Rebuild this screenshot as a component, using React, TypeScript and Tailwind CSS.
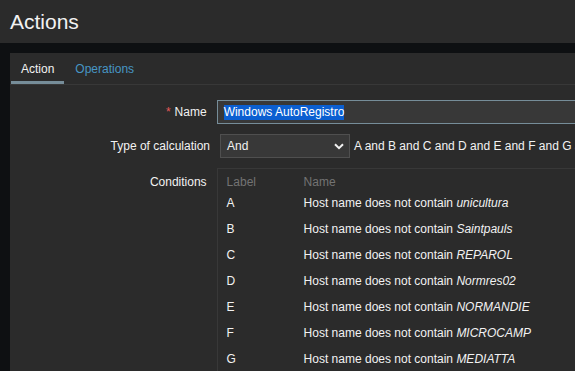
const conditions = [
  { label: "A", value: "unicultura" },
  { label: "B", value: "Saintpauls" },
  { label: "C", value: "REPAROL" },
  { label: "D", value: "Normres02" },
  { label: "E", value: "NORMANDIE" },
  { label: "F", value: "MICROCAMP" },
  { label: "G", value: "MEDIATTA" },
];

const Chevron = () => (
  <svg width="10" height="7" viewBox="0 0 10 7" className="shrink-0">
    <path d="M1 1.2 L5 5.2 L9 1.2" fill="none" stroke="#f2f2f2" strokeWidth="2" />
  </svg>
);

export default function App() {
  return (
    <div
      className="w-[575px] h-[371px] overflow-hidden bg-[#0e1012] text-[#f2f2f2] text-[12px]"
      style={{ fontFamily: '"Liberation Sans", Arial, sans-serif' }}
    >
      <header className="h-[43px] bg-[#2b2b2b] flex items-center pl-[10px]">
        <h1 className="text-[21px] leading-none text-[#f2f2f2]">Actions</h1>
      </header>

      <div className="pt-[10px] pl-[10px]">
        <div className="bg-[#2b2b2b] w-[600px] h-[400px]">
          {/* tabs */}
          <div className="flex h-[32px] border-b border-[#383838]">
            <div className="ml-[1px] px-[10px] h-full flex items-center border-b-[3px] border-[#768d99] pt-[3px] text-[#f2f2f2]">
              Action
            </div>
            <div className="px-[11px] h-full flex items-center text-[#4796c4]">
              Operations
            </div>
          </div>

          {/* form */}
          <div className="pt-[15px] flex flex-col gap-[10px]">
            <div className="flex items-center">
              <div className="w-[210px] pr-[10px] text-right">
                <span className="text-[#e45959] mr-[4px]">*</span>Name
              </div>
              <div className="w-[400px] h-[24px] bg-[#383838] border border-[#768d99] flex items-center pl-[6px]">
                <span className="bg-[#0b5fd1] text-white leading-[15px]">Windows AutoRegistro</span>
              </div>
            </div>

            <div className="flex items-center">
              <div className="w-[210px] pr-[10px] text-right">Type of calculation</div>
              <div className="w-[130px] h-[24px] bg-[#383838] border border-[#4f4f4f] flex items-center justify-between pl-[6px] pr-[5px]">
                <span>And</span>
                <Chevron />
              </div>
              <div className="ml-[4px] whitespace-nowrap">
                A and B and C and D and E and F and G and
              </div>
            </div>

            <div className="flex items-start">
              <div className="w-[210px] pr-[10px] text-right pt-[5px]">Conditions</div>
              <div className="w-[400px] border-t border-l border-[#383838] pt-[5px] pl-[9px]">
                <div className="flex h-[16px] leading-[16px] text-[#737373]">
                  <div className="w-[77px]">Label</div>
                  <div>Name</div>
                </div>
                {conditions.map((c) => (
                  <div key={c.label} className="flex h-[26px] items-center">
                    <div className="w-[77px]">{c.label}</div>
                    <div className="whitespace-nowrap">
                      Host name does not contain <em>{c.value}</em>
                    </div>
                  </div>
                ))}
              </div>
            </div>
          </div>
        </div>
      </div>
    </div>
  );
}
